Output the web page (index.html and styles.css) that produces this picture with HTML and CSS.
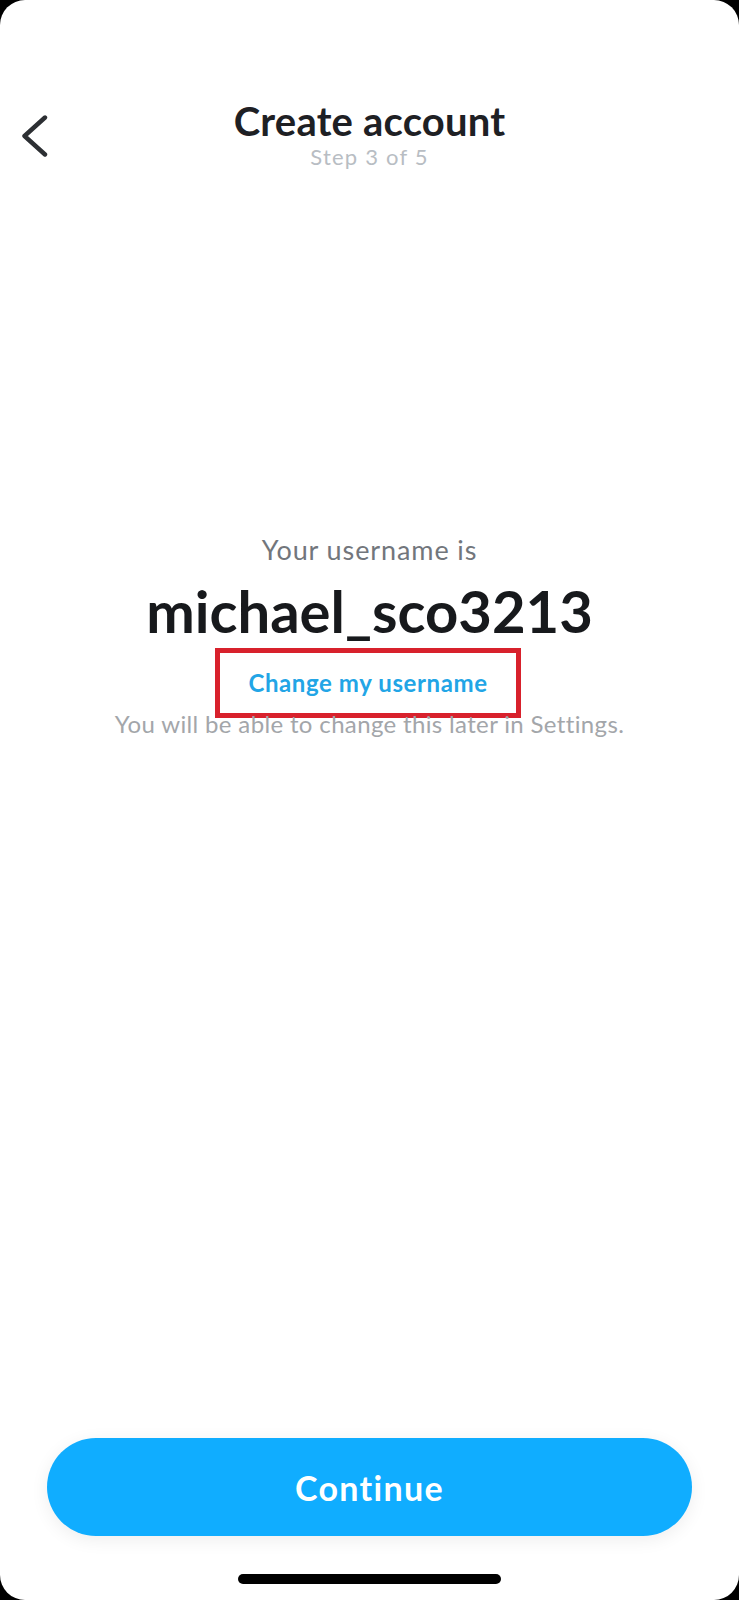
FILE: index.html
```html
<!DOCTYPE html>
<html lang="en">
<head>
<meta charset="utf-8">
<title>Create account</title>
<link rel="stylesheet" href="styles.css">
</head>
<body>
<div class="screen">
  <header class="header">
    <button class="back" aria-label="Back">
      <svg width="26" height="42" viewBox="0 0 26 42"><path d="M23 2.5 L2.5 21 L23 39.5" fill="none" stroke="#2c2f33" stroke-width="4.4" stroke-linecap="round" stroke-linejoin="round"/></svg>
    </button>
    <div class="titles">
      <h1 class="title">Create account</h1>
      <div class="step">Step 3 of 5</div>
    </div>
    <div class="header-spacer"></div>
  </header>

  <main class="content">
    <p class="label">Your username is</p>
    <p class="username">michael_sco3213</p>
    <a class="change-link" href="#">Change my username</a>
    <p class="note">You will be able to change this later in Settings.</p>
  </main>

  <div class="spacer"></div>

  <button class="continue">Continue</button>
  <div class="home-indicator"></div>
</div>
</body>
</html>
```
FILE: styles.css
```css
html, body {
  margin: 0;
  padding: 0;
  background: #000;
}

.screen {
  width: 739px;
  height: 1600px;
  background: #fff;
  border-radius: 25px;
  overflow: hidden;
  display: flex;
  flex-direction: column;
  font-family: Lato, "Open Sans", sans-serif;
}

.header {
  display: grid;
  grid-template-columns: 1fr auto 1fr;
  padding-top: 99px;
}

.back {
  justify-self: start;
  align-self: start;
  margin: 16px 0 0 22px;
  padding: 0;
  border: 0;
  background: none;
  width: 26px;
  height: 42px;
  display: flex;
}

.titles {
  display: flex;
  flex-direction: column;
  align-items: center;
}

.title {
  margin: 0;
  font-size: 40px;
  line-height: 44px;
  font-weight: 700;
  letter-spacing: 0.2px;
  color: #1e2024;
}

.step {
  margin-top: 1px;
  font-size: 22px;
  line-height: 26px;
  letter-spacing: 1.2px;
  color: #b8bdc3;
}

.content {
  margin-top: 364px;
  display: flex;
  flex-direction: column;
  align-items: center;
  text-align: center;
}

.label {
  margin: 0;
  font-size: 27px;
  line-height: 32px;
  letter-spacing: 0.9px;
  color: #72767c;
}

.username {
  margin: 13px 0 0;
  font-size: 58px;
  line-height: 64px;
  font-weight: 700;
  color: #17191c;
}

.change-link {
  margin-top: 5px;
  margin-right: 3px;
  padding: 0 28px;
  border: 5px solid #d8212c;
  font-size: 24px;
  line-height: 60px;
  font-weight: 700;
  letter-spacing: 0.6px;
  color: #22a5e6;
  text-decoration: none;
}

.note {
  margin: -8px 0 0;
  font-size: 24px;
  line-height: 28px;
  letter-spacing: 0.35px;
  color: #a3a6aa;
}

.spacer {
  flex: 1;
}

.continue {
  margin: 0 47px;
  height: 98px;
  border: 0;
  border-radius: 49px;
  background: #10adff;
  box-shadow: 0 4px 18px rgba(0, 0, 0, 0.07);
  color: #fff;
  font-family: Lato, "Open Sans", sans-serif;
  font-size: 34px;
  font-weight: 700;
  letter-spacing: 1.3px;
}

.home-indicator {
  align-self: center;
  margin: 38px 0 16px;
  width: 263px;
  height: 10px;
  border-radius: 5px;
  background: #000;
}
```
